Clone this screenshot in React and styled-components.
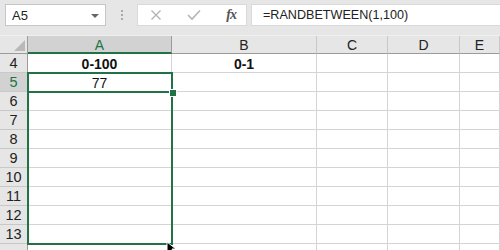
import React from 'react'
import styled, { createGlobalStyle } from 'styled-components'

const GREEN = '#217346'
const GRID = '#d4d4d4'

const GlobalStyle = createGlobalStyle`
  html, body {
    margin: 0;
    padding: 0;
    background: #fff;
    overflow: hidden;
  }
  body {
    font-family: "Liberation Sans", Arial, sans-serif;
  }
`

const Page = styled.div`
  width: 500px;
  height: 250px;
  overflow: hidden;
  display: flex;
  flex-direction: column;
`

// FORMULA BAR
const Toolbar = styled.div`
  height: 36px;
  flex: none;
  background: #e6e6e6;
  display: flex;
  align-items: flex-start;
  padding-top: 4px;
  padding-left: 5px;
  box-sizing: border-box;
  border-bottom: 1px solid #f0f0f0;
`

const NameBox = styled.div`
  width: 101px;
  height: 22px;
  box-sizing: border-box;
  background: #fff;
  border: 1px solid #c6c6c6;
  display: flex;
  align-items: center;
  justify-content: space-between;
  padding: 0 6px 0 6px;
  font-size: 13px;
  color: #222;
`

const Caret = styled.span`
  width: 0;
  height: 0;
  border-left: 4px solid transparent;
  border-right: 4px solid transparent;
  border-top: 4px solid #666;
  margin-top: 1px;
`

const Dots = styled.div`
  width: 31px;
  height: 22px;
  display: flex;
  flex-direction: column;
  align-items: center;
  justify-content: center;
  gap: 2px;

  span {
    width: 2px;
    height: 2px;
    background: #a8a8a8;
  }
`

const IconBox = styled.div`
  width: 110px;
  height: 22px;
  box-sizing: border-box;
  background: #fff;
  border: 1px solid #d9d9d9;
  display: flex;
  align-items: center;
  justify-content: space-between;
  padding: 0 10px 0 12px;
  margin-right: 4px;
`

const Fx = styled.span`
  font-family: "Liberation Serif", "DejaVu Serif", serif;
  font-style: italic;
  font-weight: 700;
  font-size: 14px;
  color: #555;
  letter-spacing: -1px;
`

const FormulaBox = styled.div`
  flex: 1;
  height: 22px;
  box-sizing: border-box;
  background: #fff;
  border: 1px solid #d9d9d9;
  border-right: none;
  display: flex;
  align-items: center;
  padding-left: 11px;
  font-size: 12.6px;
  color: #222;
`

// SHEET
const Sheet = styled.div`
  position: relative;
  flex: 1;
  display: grid;
  grid-template-columns: 28px 144px 145px 71px 72px 1fr;
  grid-template-rows: 18px;
  grid-auto-rows: 19px;
`

const Corner = styled.div`
  background: #e6e6e6;
  border-right: 1px solid #9b9b9b;
  border-bottom: 1px solid #9b9b9b;
  box-sizing: border-box;
  display: flex;
  align-items: flex-end;
  justify-content: flex-end;
  padding: 0 2px 2px 0;

  span {
    width: 0;
    height: 0;
    border-left: 11px solid transparent;
    border-bottom: 11px solid #b9b9b9;
  }
`

const ColHead = styled.div`
  background: ${({ active }) => (active ? '#d2d2d2' : '#e6e6e6')};
  border-right: 1px solid ${({ active }) => (active ? '#9b9b9b' : '#c8c8c8')};
  border-bottom: ${({ active }) => (active ? `2px solid ${GREEN}` : '1px solid #9b9b9b')};
  box-sizing: border-box;
  display: flex;
  align-items: center;
  justify-content: center;
  font-size: 14px;
  color: ${({ active }) => (active ? GREEN : '#222')};
  padding-top: ${({ active }) => (active ? '1px' : '0')};
`

const RowHead = styled.div`
  background: ${({ active }) => (active ? '#d2d2d2' : '#e6e6e6')};
  border-right: 1px solid #9b9b9b;
  border-bottom: 1px solid #c8c8c8;
  box-sizing: border-box;
  display: flex;
  align-items: center;
  justify-content: center;
  font-size: 14.5px;
  color: ${({ active }) => (active ? GREEN : '#222')};
`

const Cell = styled.div`
  border-right: 1px solid ${GRID};
  border-bottom: 1px solid ${GRID};
  box-sizing: border-box;
  display: flex;
  align-items: center;
  justify-content: center;
  padding-top: 2px;
  font-size: 14px;
  font-weight: ${({ bold }) => (bold ? 700 : 400)};
  color: #111;
`

// OVERLAYS
const Selection = styled.div`
  position: absolute;
  left: 27px;
  top: 36px;
  width: 146px;
  height: 173px;
  border: 2px solid ${GREEN};
  box-sizing: border-box;
  pointer-events: none;
`

const ActiveLine = styled.div`
  position: absolute;
  left: 28px;
  top: 55px;
  width: 142px;
  height: 2px;
  background: ${GREEN};
`

const Handle = styled.div`
  position: absolute;
  left: 169px;
  top: 53px;
  width: 6px;
  height: 6px;
  background: ${GREEN};
  border: 1px solid #fff;
`

const Cursor = styled.svg`
  position: absolute;
  left: 166px;
  top: 205px;
`

const X = () => (
  <svg width="12" height="12" viewBox="0 0 12 12">
    <path d="M1.5 1.5 L10.5 10.5 M10.5 1.5 L1.5 10.5" stroke="#b4b4b4" strokeWidth="1.4" fill="none" />
  </svg>
)

const Check = () => (
  <svg width="14" height="12" viewBox="0 0 14 12">
    <path d="M1 6 L5 10 L13 1.5" stroke="#b4b4b4" strokeWidth="1.6" fill="none" />
  </svg>
)

const columns = ['A', 'B', 'C', 'D', 'E']
// row 14 only peeks in at the bottom edge, its number is not visible
const rows = [4, 5, 6, 7, 8, 9, 10, 11, 12, 13, 14]

const cellText = (row, col) => {
  if (row === 4 && col === 'A') return ['0-100', true]
  if (row === 4 && col === 'B') return ['0-1', true]
  if (row === 5 && col === 'A') return ['77', false]
  return ['', false]
}

const App = () => {
  return (
    <>
      <GlobalStyle />
      <Page>
        <Toolbar>
          <NameBox>
            A5
            <Caret />
          </NameBox>
          <Dots>
            <span />
            <span />
            <span />
          </Dots>
          <IconBox>
            <X />
            <Check />
            <Fx>fx</Fx>
          </IconBox>
          <FormulaBox>=RANDBETWEEN(1,100)</FormulaBox>
        </Toolbar>
        <Sheet>
          <Corner>
            <span />
          </Corner>
          {columns.map((c) => (
            <ColHead key={c} active={c === 'A'}>
              {c}
            </ColHead>
          ))}
          {rows.map((r) => (
            <React.Fragment key={r}>
              <RowHead active={r === 5}>{r < 14 ? r : ''}</RowHead>
              {columns.map((c) => {
                const [text, bold] = cellText(r, c)
                return (
                  <Cell key={c} bold={bold}>
                    {text}
                  </Cell>
                )
              })}
            </React.Fragment>
          ))}
          <Selection />
          <ActiveLine />
          <Handle />
          <Cursor width="12" height="14" viewBox="0 0 12 14">
            <path d="M1 1 L1 12 L4 9 L6 13 L8 12 L6 8 L10 8 Z" fill="#000" stroke="#fff" strokeWidth="1" />
          </Cursor>
        </Sheet>
      </Page>
    </>
  )
}

export default App
